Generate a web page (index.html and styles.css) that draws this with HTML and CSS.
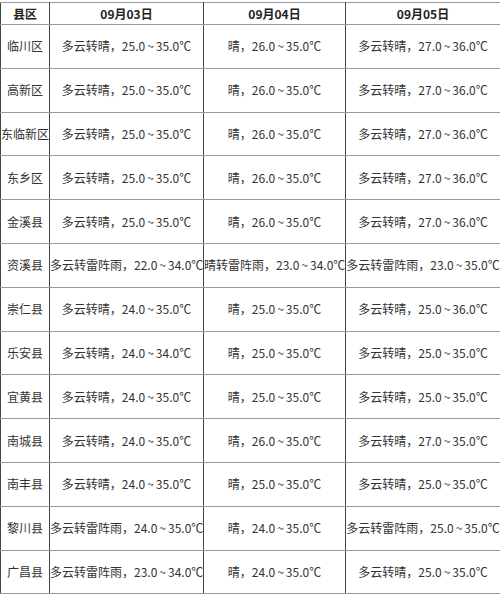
FILE: index.html
```html
<!DOCTYPE html>
<html lang="zh">
<head>
<meta charset="utf-8">
<link rel="stylesheet" href="styles.css">
</head>
<body>
<table class="wx">
<colgroup><col class="c1"><col class="c2"><col class="c3"><col class="c4"></colgroup>
<thead>
<tr class="head"><th>县区</th><th>09月03日</th><th>09月04日</th><th>09月05日</th></tr>
</thead>
<tbody>
<tr><td>临川区</td><td>多云转晴，25.0<span class="t">~</span>35.0℃</td><td>晴，26.0<span class="t">~</span>35.0℃</td><td>多云转晴，27.0<span class="t">~</span>36.0℃</td></tr>
<tr><td>高新区</td><td>多云转晴，25.0<span class="t">~</span>35.0℃</td><td>晴，26.0<span class="t">~</span>35.0℃</td><td>多云转晴，27.0<span class="t">~</span>36.0℃</td></tr>
<tr><td>东临新区</td><td>多云转晴，25.0<span class="t">~</span>35.0℃</td><td>晴，26.0<span class="t">~</span>35.0℃</td><td>多云转晴，27.0<span class="t">~</span>36.0℃</td></tr>
<tr><td>东乡区</td><td>多云转晴，25.0<span class="t">~</span>35.0℃</td><td>晴，26.0<span class="t">~</span>35.0℃</td><td>多云转晴，27.0<span class="t">~</span>36.0℃</td></tr>
<tr><td>金溪县</td><td>多云转晴，25.0<span class="t">~</span>35.0℃</td><td>晴，26.0<span class="t">~</span>35.0℃</td><td>多云转晴，27.0<span class="t">~</span>36.0℃</td></tr>
<tr><td>资溪县</td><td>多云转雷阵雨，22.0<span class="t">~</span>34.0℃</td><td>晴转雷阵雨，23.0<span class="t">~</span>34.0℃</td><td>多云转雷阵雨，23.0<span class="t">~</span>35.0℃</td></tr>
<tr><td>崇仁县</td><td>多云转晴，24.0<span class="t">~</span>35.0℃</td><td>晴，25.0<span class="t">~</span>35.0℃</td><td>多云转晴，25.0<span class="t">~</span>36.0℃</td></tr>
<tr><td>乐安县</td><td>多云转晴，24.0<span class="t">~</span>34.0℃</td><td>晴，25.0<span class="t">~</span>35.0℃</td><td>多云转晴，25.0<span class="t">~</span>35.0℃</td></tr>
<tr><td>宜黄县</td><td>多云转晴，24.0<span class="t">~</span>35.0℃</td><td>晴，25.0<span class="t">~</span>35.0℃</td><td>多云转晴，25.0<span class="t">~</span>35.0℃</td></tr>
<tr><td>南城县</td><td>多云转晴，24.0<span class="t">~</span>35.0℃</td><td>晴，26.0<span class="t">~</span>35.0℃</td><td>多云转晴，27.0<span class="t">~</span>35.0℃</td></tr>
<tr><td>南丰县</td><td>多云转晴，24.0<span class="t">~</span>35.0℃</td><td>晴，25.0<span class="t">~</span>35.0℃</td><td>多云转晴，25.0<span class="t">~</span>35.0℃</td></tr>
<tr><td>黎川县</td><td>多云转雷阵雨，24.0<span class="t">~</span>35.0℃</td><td>晴，24.0<span class="t">~</span>35.0℃</td><td>多云转雷阵雨，25.0<span class="t">~</span>35.0℃</td></tr>
<tr><td>广昌县</td><td>多云转雷阵雨，23.0<span class="t">~</span>34.0℃</td><td>晴，24.0<span class="t">~</span>35.0℃</td><td>多云转晴，25.0<span class="t">~</span>35.0℃</td></tr>
</tbody>
</table>
</body>
</html>
```
FILE: styles.css
```css
html, body {
  margin: 0;
  padding: 0;
  background: #fff;
}
body {
  padding-top: 2px;
  font-family: "Noto Sans CJK SC", "Noto Sans", sans-serif;
  font-size: 12px;
  color: #333;
}
.wx {
  border-collapse: collapse;
  table-layout: fixed;
  width: 500px;
}
.c1 { width: 49px; }
.c2 { width: 154px; }
.c3 { width: 142px; }
.c4 { width: 155px; }
.wx th, .wx td {
  padding: 0;
  text-align: center;
  vertical-align: middle;
  white-space: nowrap;
  border-top: 1px solid #999;
  border-bottom: 1px solid #999;
  border-left: 1px solid #444;
  border-right: 1px solid #444;
  line-height: 16px;
}
.wx th {
  font-weight: bold;
  color: #222;
}
.t {
  margin: 0 2px;
}
.head { height: 22px; }
.wx tbody tr { height: 43.8px; }
```
